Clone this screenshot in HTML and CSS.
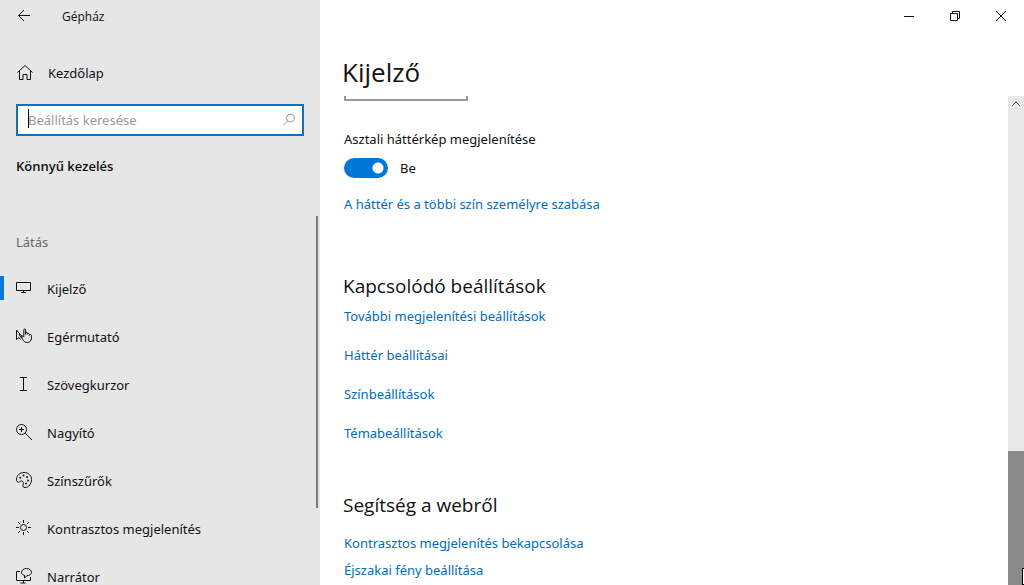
FILE: index.html
```html
<!DOCTYPE html>
<html lang="hu">
<head>
<meta charset="utf-8">
<title>Gépház</title>
<link rel="stylesheet" href="styles.css">
</head>
<body>
<div class="window">
  <aside class="sidebar">
    <header class="side-title">
      <button class="back" type="button" aria-label="Vissza">
        <svg class="icon" width="16" height="16" viewBox="0 0 16 16"><path d="M14 7.500H2.500M8 2 2.500 7.500 8 13"/></svg>
      </button>
      <span class="app-name">Gépház</span>
    </header>
    <a class="home" href="#">
      <svg class="icon" width="18" height="18" viewBox="0 0 18 18"><path d="M1.500 8.500 9 1.500l7.500 7M3.500 7v8.500h3.500v-5h4v5h3.500V7"/></svg>
      <span>Kezdőlap</span>
    </a>
    <div class="search">
      <input class="search-box" type="text" placeholder="Beállítás keresése" aria-label="Beállítás keresése">
      <span class="caret"></span>
      <svg class="search-icon" width="14" height="14" viewBox="0 0 14 14"><circle cx="8.500" cy="5" r="4"/><path d="M5.500 8 1 12.500"/></svg>
    </div>
    <h2 class="category">Könnyű kezelés</h2>
    <nav class="nav">
      <h3 class="group">Látás</h3>
      <a class="item active" href="#">
        <svg class="icon" width="18" height="18" viewBox="0 0 18 18"><path d="M1.500 3.500h14v8h-14zM8.500 11.500v2M6 13.500h5"/></svg>
        <span>Kijelző</span>
      </a>
      <a class="item" href="#">
        <svg class="icon" width="18" height="18" viewBox="0 0 18 18"><path d="M7 9.500 1.500 3v9.500l2.500-2 1.500 2M4 7l1.500 3 2 .5M8.800 10V3c0-1.400 1.800-1.400 1.800 0v4.500M10.600 7V6c.4-1 1.700-.8 1.800.2v1.300M12.400 7c.3-.9 1.700-.8 1.900.2v1.300M14.400 8c.5-.8 2-.5 2 .5v2.500c0 3-1.700 4.500-4.200 4.500-2 0-3.200-1-4-2.200L6 9.500c.4-1 1.800-1 2.800.5"/></svg>
        <span>Egérmutató</span>
      </a>
      <a class="item" href="#">
        <svg class="icon" width="18" height="18" viewBox="0 0 18 18"><path d="M5 2.500h7M8.500 2.500v13M5 15.500h7"/></svg>
        <span>Szövegkurzor</span>
      </a>
      <a class="item" href="#">
        <svg class="icon" width="18" height="18" viewBox="0 0 18 18"><circle cx="6.500" cy="6.500" r="5"/><path d="m10 10 7 7M4 6.500h5M6.500 4v5"/></svg>
        <span>Nagyító</span>
      </a>
      <a class="item" href="#">
        <svg class="icon" width="18" height="18" viewBox="0 0 18 18"><path d="M1.500 8C2 4 5 1.500 9 1.500c4.500 0 7.500 3 7.500 7S14 16.500 10 16.500c-1.700 0-2.500-1-2-2.500.7-2 .3-3.500-1-4-1-.4-1.700.2-2.500.8C3 12 1.200 10.500 1.500 8Z"/><g class="dots"><circle cx="5.300" cy="6.700" r="1"/><circle cx="8.500" cy="4.500" r="1"/><circle cx="12" cy="6" r="1"/><circle cx="13" cy="9.500" r="1"/><circle cx="11" cy="12.500" r="1"/></g></svg>
        <span>Színszűrők</span>
      </a>
      <a class="item" href="#">
        <svg class="icon" width="18" height="18" viewBox="0 0 18 18"><circle cx="8.500" cy="8.500" r="3"/><path d="M8.500 1v3M8.500 13v3M1 8.500h3M13 8.500h3M3.200 3.200l2 2M11.800 11.800l2 2M13.800 3.200l-2 2M5.200 11.800l-2 2"/></svg>
        <span>Kontrasztos megjelenítés</span>
      </a>
      <a class="item" href="#">
        <svg class="icon" width="18" height="18" viewBox="0 0 18 18"><path d="M5 4.500H1.500v9h14V10M8.500 13.500v2.500M5.500 16h5M9.500 8.300C7.500 7.800 6.500 6.700 6.500 5.300c0-2 2.200-3.800 5-3.800s5 1.800 5 3.800-2 3.200-4.500 3.400L9.500 11Z"/></svg>
        <span>Narrátor</span>
      </a>
      <span class="nav-thumb"></span>
    </nav>
  </aside>

  <main class="main">
    <header class="controls">
      <button class="control" type="button" aria-label="Kis méret"><svg class="icon" width="12" height="12" viewBox="0 0 12 12"><path d="M1 6.500h10"/></svg></button>
      <button class="control" type="button" aria-label="Előző méret"><svg class="icon" width="12" height="12" viewBox="0 0 12 12"><path d="M1.500 3.500h7v7h-7zM3.500 3.500v-2h7v7h-2"/></svg></button>
      <button class="control" type="button" aria-label="Bezárás"><svg class="icon" width="12" height="12" viewBox="0 0 12 12"><path d="m1 1 10 10M11 1 1 11"/></svg></button>
    </header>
    <h1 class="page-title">Kijelző</h1>
    <div class="body">
      <div class="content">
        <select class="combo"><option></option></select>
        <section class="setting">
          <label class="setting-label" for="wallpaper">Asztali háttérkép megjelenítése</label>
          <div class="toggle-row">
            <input class="toggle" id="wallpaper" type="checkbox" role="switch" checked>
            <span>Be</span>
          </div>
          <a class="link" href="#">A háttér és a többi szín személyre szabása</a>
        </section>
        <section class="related">
          <h2 class="section-title">Kapcsolódó beállítások</h2>
          <a class="link" href="#">További megjelenítési beállítások</a>
          <a class="link" href="#">Háttér beállításai</a>
          <a class="link" href="#">Színbeállítások</a>
          <a class="link" href="#">Témabeállítások</a>
        </section>
        <section class="help">
          <h2 class="section-title">Segítség a webről</h2>
          <a class="link" href="#">Kontrasztos megjelenítés bekapcsolása</a>
          <a class="link" href="#">Éjszakai fény beállítása</a>
        </section>
      </div>
      <div class="scrollbar">
        <button class="scroll-up" type="button" aria-label="Görgetés felfelé"><svg class="icon" width="10" height="6" viewBox="0 0 10 6"><path d="m1 5 4-4 4 4"/></svg></button>
        <span class="thumb"></span>
      </div>
    </div>
  </main>
  <span class="pointer"></span>
</div>
</body>
</html>
```
FILE: styles.css
```css
* { box-sizing: border-box; }

body {
  margin: 0;
  font: 13px/20px "Noto Sans", "Open Sans", sans-serif;
  color: #111;
  background: #fff;
}

h1, h2, h3 { margin: 0; font-weight: 400; }
a { color: inherit; text-decoration: none; }
button { padding: 0; border: 0; background: none; color: inherit; }

.window {
  position: relative;
  display: flex;
  height: 100vh;
  overflow: hidden;
}

.icon {
  display: block;
  flex: none;
  fill: none;
  stroke: #111;
  stroke-width: 1;
}
.dots { fill: #111; stroke: none; }

.sidebar {
  display: flex;
  flex-direction: column;
  flex: none;
  width: 320px;
  background: #e6e6e6;
}
.side-title {
  display: flex;
  align-items: center;
  flex: none;
  height: 32px;
  font-family: "Open Sans", "Noto Sans", sans-serif;
  font-size: 12px;
}
.back {
  display: grid;
  place-items: center;
  width: 48px;
  height: 32px;
}
.app-name { padding: 2px 0 0 14px; }
.home {
  display: flex;
  align-items: center;
  gap: 14px;
  flex: none;
  height: 40px;
  margin-top: 21px;
  padding-left: 16px;
}
.search {
  position: relative;
  flex: none;
  margin: 11px 16px 0;
}
.search-box {
  display: block;
  width: 100%;
  height: 32px;
  padding: 0 32px 1px 10px;
  border: 2px solid #1470b8;
  border-radius: 0;
  outline: 0;
  background: #fff;
  font: inherit;
}
.search-box::placeholder { color: #999; opacity: 1; }
.caret {
  position: absolute;
  top: 5px;
  left: 12px;
  width: 1px;
  height: 19px;
  background: #000;
}
.search-icon {
  position: absolute;
  top: 9px;
  right: 8px;
  fill: none;
  stroke: #999;
}
.category {
  flex: none;
  margin: 20px 16px 0;
  font-family: "Open Sans", "Noto Sans", sans-serif;
  font-size: 13px;
  font-weight: 600;
  line-height: 20px;
}
.nav {
  position: relative;
  flex: 1;
  min-height: 0;
  margin-top: 40px;
  padding-top: 16px;
  overflow: hidden;
}
.group {
  margin: 0 16px 13px;
  font-size: 13px;
  color: #666;
}
.item {
  display: flex;
  align-items: center;
  gap: 14px;
  height: 48px;
  padding-left: 15px;
}
.item .icon { margin-bottom: 2px; }
.active {
  background: linear-gradient(#0078d7, #0078d7) 0 11px / 4px 24px no-repeat;
}
.nav-thumb {
  position: absolute;
  top: 0;
  right: 2px;
  width: 2px;
  height: 79%;
  background: #7a7a7a;
}

.main {
  display: flex;
  flex-direction: column;
  flex: 1;
  min-width: 0;
}
.controls {
  display: flex;
  justify-content: flex-end;
  flex: none;
}
.control {
  display: grid;
  place-items: center;
  width: 46px;
  height: 32px;
}
.page-title {
  flex: none;
  margin: 20px 22px 0;
  font-family: "Open Sans", "Noto Sans", sans-serif;
  font-size: 26px;
  font-weight: 400;
  line-height: 40px;
}
.body {
  display: flex;
  flex: 1;
  min-height: 0;
  margin-top: 4px;
}
.content {
  flex: 1;
  padding: 0 24px;
  overflow: hidden;
}
.combo {
  display: block;
  width: 124px;
  height: 32px;
  margin-top: -27px;
  border: 2px solid #999;
  border-radius: 0;
  background: #fff;
  appearance: none;
}
.setting { margin-top: 28px; }
.setting-label { display: block; }
.toggle-row {
  display: flex;
  align-items: center;
  gap: 12px;
  margin: 9px 0 16px;
}
.toggle {
  flex: none;
  width: 44px;
  height: 20px;
  margin: 0;
  border-radius: 10px;
  appearance: none;
  background: radial-gradient(circle at 34px 10px, #fff 5px, #0078d7 6px);
}
.link {
  display: block;
  color: #006cbe;
}
.section-title {
  margin-left: -1px;
  font-family: "Open Sans", "Noto Sans", sans-serif;
  font-size: 19px;
  line-height: 28px;
}
.related { margin-top: 58px; }
.related .section-title { margin-bottom: 6px; }
.related .link + .link { margin-top: 19px; }
.help { margin-top: 48px; }
.help .section-title { margin-bottom: 14px; }
.help .link + .link { margin-top: 7px; }

.scrollbar {
  display: flex;
  flex-direction: column;
  justify-content: space-between;
  flex: none;
  width: 16px;
  background: #e8e8e8;
}
.scroll-up {
  display: grid;
  place-items: center;
  width: 16px;
  height: 16px;
}
.scroll-up .icon { stroke: #555; }
.thumb {
  height: 27.4%;
  background: #8b8b8b;
}
.pointer {
  position: absolute;
  right: 0;
  bottom: 0;
  width: 2px;
  height: 17px;
  border: solid #000;
  border-width: 1px 0 1px 1px;
  background: #fff;
}
```
